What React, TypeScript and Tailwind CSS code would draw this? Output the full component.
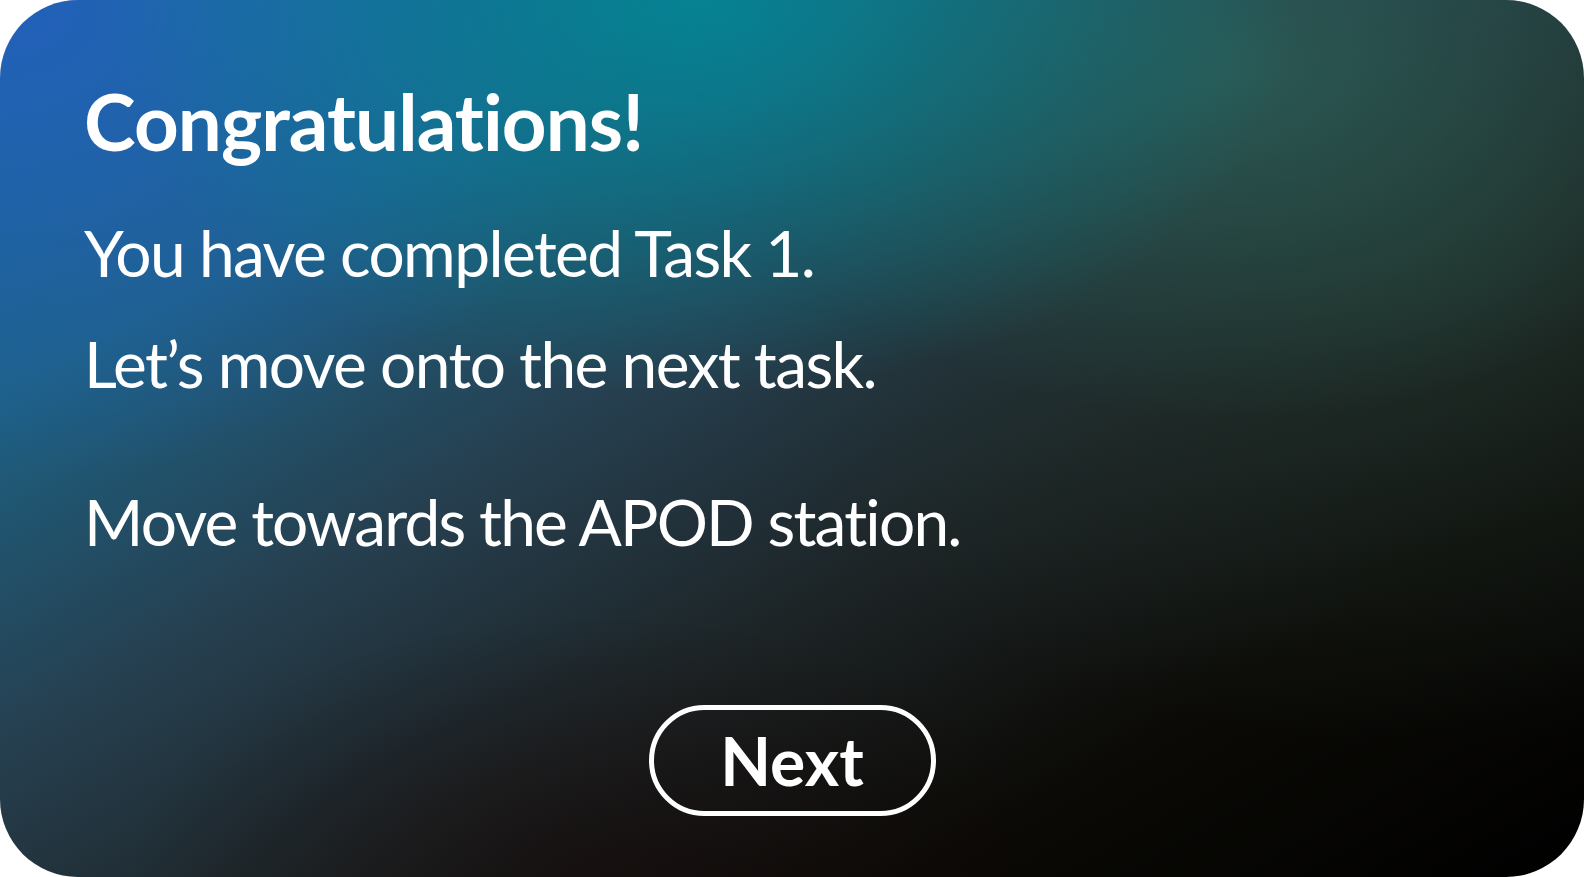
import React from 'react';

const App: React.FC = () => {
  return (
    <div className="w-[1584px] h-[877px] bg-white">
      <div
        className="w-full h-full rounded-[78px] overflow-hidden flex flex-col text-white bg-[radial-gradient(ellipse_38%_45%_at_44%_0%,rgba(4,132,148,0.95)_0%,rgba(4,132,148,0)_100%),radial-gradient(ellipse_40%_55%_at_0%_0%,rgba(34,96,186,1)_0%,rgba(34,96,186,0)_100%),radial-gradient(ellipse_34%_40%_at_78%_8%,rgba(44,96,88,0.8)_0%,rgba(44,96,88,0)_100%),radial-gradient(ellipse_45%_55%_at_90%_30%,rgba(34,52,44,0.7)_0%,rgba(34,52,44,0)_100%),radial-gradient(ellipse_30%_30%_at_38%_100%,rgba(22,6,6,0.5)_0%,rgba(22,6,6,0)_100%),linear-gradient(150deg,#1c6a98_0%,#1d6182_22%,#263f4f_42%,#1d2426_60%,#0b0a06_78%,#000000_100%)]"
        style={{ fontFamily: 'Lato, "Noto Sans", sans-serif' }}
      >
        <div className="pl-[84px] pt-[82px] flex flex-col">
          <h1 className="text-[78px] font-bold leading-none tracking-[-0.9px]">Congratulations!</h1>
          <p className="mt-[61px] text-[64px] leading-none tracking-[-1.6px]">You have completed Task 1.</p>
          <p className="mt-[47px] text-[64px] leading-none tracking-[-1.6px]">Let’s move onto the next task.</p>
          <p className="mt-[94px] text-[64px] leading-none tracking-[-1.8px]">Move towards the APOD station.</p>
        </div>
        <div className="flex justify-center mt-[151px]">
          <button className="w-[287px] h-[111px] rounded-full border-[5px] border-white flex items-center justify-center text-[66px] font-bold leading-none text-white">
            Next
          </button>
        </div>
      </div>
    </div>
  );
};

export default App;
